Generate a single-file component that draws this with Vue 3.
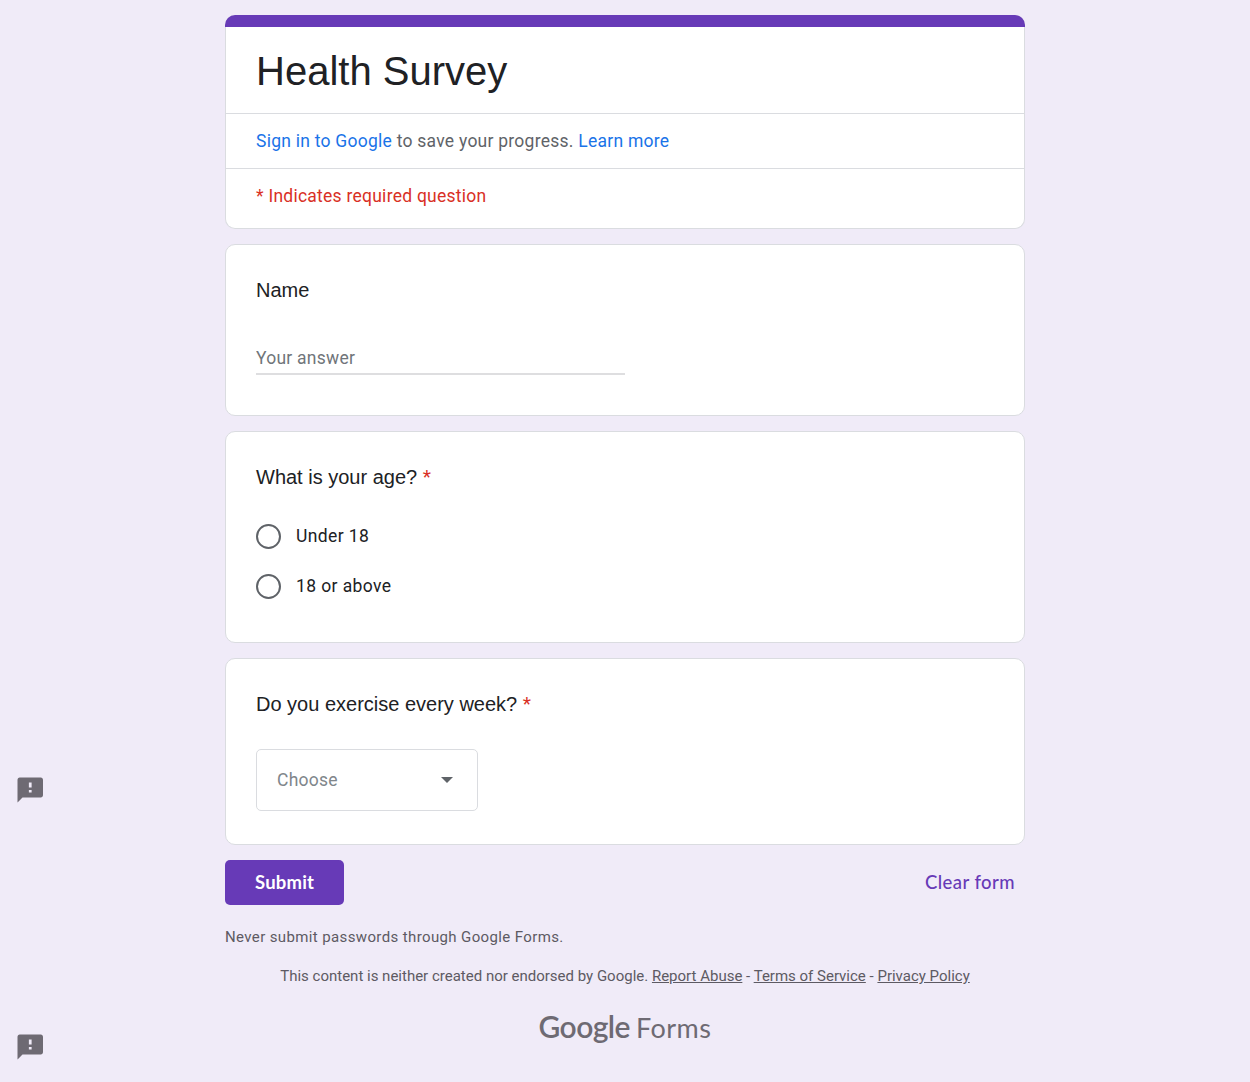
<script setup>
import { ref } from 'vue'

const name = ref('')
const age = ref('')
const ages = ['Under 18', '18 or above']
const links = ['Report Abuse', 'Terms of Service', 'Privacy Policy']
</script>

<template>
  <div class="page">
    <main class="form">
      <header class="card head">
        <div class="stripe"></div>
        <h1 class="title">Health Survey</h1>
        <p class="row signin"><a>Sign in to Google</a> to save your progress. <a>Learn more</a></p>
        <p class="row required">* Indicates required question</p>
      </header>

      <section class="card name">
        <h2 class="question">Name</h2>
        <input v-model="name" class="answer" type="text" placeholder="Your answer" />
      </section>

      <section class="card age">
        <h2 class="question">What is your age? <span class="star">*</span></h2>
        <div class="options">
          <label v-for="a in ages" :key="a" class="option">
            <input v-model="age" class="radio" type="radio" name="age" :value="a" />
            <span>{{ a }}</span>
          </label>
        </div>
      </section>

      <section class="card exercise">
        <h2 class="question">Do you exercise every week? <span class="star">*</span></h2>
        <div class="select">
          <span>Choose</span>
          <svg width="12" height="6" viewBox="0 0 12 6"><path d="M0 0h12L6 6z" fill="#5f6368" /></svg>
        </div>
      </section>

      <div class="actions">
        <button class="submit">
          <svg width="60" height="24"><text x="0" y="17.5" textLength="59" fill="#fff">Submit</text></svg>
        </button>
        <button class="clear">
          <svg width="90" height="24"><text x="0" y="17.5" textLength="89.5" fill="#673ab7">Clear form</text></svg>
        </button>
      </div>

      <p class="warning">Never submit passwords through Google Forms.</p>
      <p class="legal">
        This content is neither created nor endorsed by Google.
        <template v-for="(l, i) in links" :key="l"><template v-if="i"> - </template><a>{{ l }}</a></template>
      </p>
      <div class="logo">
        <svg width="184" height="48" viewBox="0 0 184 48">
          <text class="google" x="5.5" y="34" textLength="92">Google</text>
          <text class="forms" x="103" y="34" textLength="75">Forms</text>
        </svg>
      </div>
    </main>

    <svg v-for="p in ['upper', 'lower']" :key="p" class="report" :class="p" width="30" height="30" viewBox="0 0 24 24">
      <path fill="#6e6a73" d="M20.6 2H3.8c-1.1 0-1.8.9-1.8 2v18l4-4h14.6c1.1 0 1.8-.9 1.8-2V4c0-1.1-.7-2-1.8-2zM13.3 14h-2.2v-2h2.2v2zm0-4h-2.2V6h2.2v4z" />
    </svg>
  </div>
</template>

<style>
body {
  margin: 0;
  background: #f0ebf8;
}
</style>

<style scoped>
.page {
  position: relative;
  height: 1082px;
  overflow: hidden;
  background: #f0ebf8;
  font: 17.5px/25px Roboto, sans-serif;
  letter-spacing: 0.25px;
  color: #202124;
}
h1, h2, p { margin: 0; font-weight: 400; }
.form {
  width: 800px;
  margin: 0 auto;
  padding-top: 15px;
}
.card {
  box-sizing: border-box;
  margin-bottom: 15px;
  padding: 0 30px;
  background: #fff;
  border: 1px solid #dadce0;
  border-radius: 10px;
}
.head {
  height: 214px;
  padding: 0;
  border-top: 0;
}
.stripe {
  height: 12px;
  margin: 0 -1px;
  border-radius: 10px 10px 0 0;
  background: #673ab7;
}
.title {
  height: 86px;
  padding-left: 30px;
  box-sizing: border-box;
  font: 40px/50px "Liberation Sans", Arial, sans-serif;
  letter-spacing: 0;
  padding-top: 19px;
}
.row {
  height: 54px;
  padding: 0 30px;
  border-top: 1px solid #dadce0;
  line-height: 54px;
}
.signin { color: #5f6368; }
.signin a { color: #1a73e8; }
.required { color: #d93025; }
.question {
  font: 20px/30px "Liberation Sans", Arial, sans-serif;
  letter-spacing: 0;
}
.star {
  color: #d93025;
  font-family: Roboto, sans-serif;
  font-size: 19px;
  line-height: 1;
  vertical-align: 1px;
}
.name { height: 172px; padding-top: 30px; }
.answer {
  display: block;
  box-sizing: border-box;
  width: 369px;
  height: 33px;
  margin-top: 37px;
  padding: 1px 0 0;
  border: 0;
  border-bottom: 2px solid #dedee0;
  outline: 0;
  background: transparent;
  font: inherit;
  letter-spacing: inherit;
}
.answer::placeholder { color: #70757a; opacity: 1; }
.age { height: 212px; padding-top: 30px; }
.options {
  display: flex;
  flex-direction: column;
  gap: 25px;
  margin-top: 32px;
}
.option {
  display: flex;
  align-items: center;
  gap: 15px;
  height: 25px;
  letter-spacing: 0.4px;
}
.radio {
  appearance: none;
  box-sizing: border-box;
  width: 25px;
  height: 25px;
  margin: 0;
  border: 2px solid #5f6368;
  border-radius: 50%;
}
.exercise { height: 187px; padding-top: 30px; }
.select {
  display: flex;
  align-items: center;
  justify-content: space-between;
  box-sizing: border-box;
  width: 222px;
  height: 62px;
  margin-top: 30px;
  padding: 0 24px 0 20px;
  border: 1px solid #dadce0;
  border-radius: 5px;
  color: #80868b;
}
.actions {
  display: flex;
  justify-content: space-between;
  align-items: center;
  height: 45px;
}
button {
  display: flex;
  align-items: center;
  height: 45px;
  border: 0;
  border-radius: 5px;
  font: 500 18.5px/24px "Google Sans", Lato, sans-serif;
}
button svg { overflow: visible; }
button svg text { font-weight: inherit; }
.submit { width: 119px; padding: 0 29.5px; background: #673ab7; font-weight: 700; }
.clear { padding: 0 10px; background: transparent; }
.warning {
  margin-top: 22px;
  font-size: 15px;
  line-height: 20px;
  letter-spacing: 0.375px;
  color: #5d5a63;
}
.legal {
  margin-top: 19px;
  font-size: 15px;
  line-height: 20px;
  letter-spacing: 0;
  text-align: center;
  color: #5d5a63;
}
.legal a { text-decoration: underline; }
.logo {
  display: flex;
  justify-content: center;
  margin-top: 18px;
  fill: #6e6a73;
  font-family: Lato, sans-serif;
  letter-spacing: 0;
}
.google { font-size: 30px; font-weight: 600; }
.forms { font-size: 27px; font-weight: 400; }
.report { position: absolute; left: 15px; }
.upper { top: 775px; }
.lower { top: 1032px; }
</style>
